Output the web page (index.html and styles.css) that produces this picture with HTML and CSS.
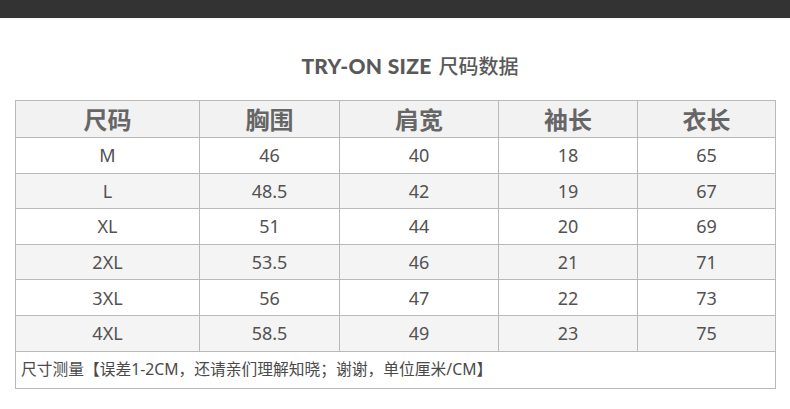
FILE: index.html
```html
<!DOCTYPE html>
<html lang="zh-CN">
<head>
<meta charset="utf-8">
<title>TRY-ON SIZE 尺码数据</title>
<link rel="stylesheet" href="styles.css">
</head>
<body>
<div class="topbar"></div>
<h1 class="title"><span class="title-en">TRY-ON SIZE</span> <span class="title-cn">尺码数据</span></h1>
<table class="size-table">
  <colgroup>
    <col class="c1"><col class="c2"><col class="c3"><col class="c4"><col class="c5">
  </colgroup>
  <thead>
    <tr class="head"><th>尺码</th><th>胸围</th><th>肩宽</th><th>袖长</th><th>衣长</th></tr>
  </thead>
  <tbody>
    <tr class="r1"><td>M</td><td>46</td><td>40</td><td>18</td><td>65</td></tr>
    <tr class="r2 alt"><td>L</td><td>48.5</td><td>42</td><td>19</td><td>67</td></tr>
    <tr class="r3"><td>XL</td><td>51</td><td>44</td><td>20</td><td>69</td></tr>
    <tr class="r4 alt"><td>2XL</td><td>53.5</td><td>46</td><td>21</td><td>71</td></tr>
    <tr class="r5"><td>3XL</td><td>56</td><td>47</td><td>22</td><td>73</td></tr>
    <tr class="r6 alt"><td>4XL</td><td>58.5</td><td>49</td><td>23</td><td>75</td></tr>
    <tr class="note"><td colspan="5">尺寸测量【误差1-2CM，还请亲们理解知晓；谢谢，单位厘米/CM】</td></tr>
  </tbody>
</table>
</body>
</html>
```

FILE: styles.css
```css
html, body {
  margin: 0;
  padding: 0;
  background: #ffffff;
}
body {
  font-family: "Noto Sans", "Noto Sans CJK SC", sans-serif;
  color: #555555;
}
.topbar {
  height: 18px;
  background: #333333;
  border-bottom: 1px solid #f4f4f4;
}
.title {
  margin: 0;
  height: 81px;
  padding: 12px 0 0 30px;
  display: flex;
  align-items: center;
  justify-content: center;
  gap: 7px;
  font-weight: normal;
  color: #595959;
  box-sizing: border-box;
}
.title-en {
  font-family: "Lato", "Open Sans", sans-serif;
  font-weight: 900;
  font-size: 21px;
  letter-spacing: 0.3px;
}
.title-cn {
  font-family: "Noto Sans CJK SC", sans-serif;
  font-weight: 500;
  font-size: 20px;
}
.size-table {
  margin: 0 0 0 15px;
  width: 761px;
  border-collapse: collapse;
  table-layout: fixed;
  border: 1px solid #8f8f8f;
}
.c1 { width: 184px; }
.c2 { width: 140px; }
.c3 { width: 159px; }
.c4 { width: 139px; }
.c5 { width: 138px; }
.size-table th,
.size-table td {
  border: 1px solid #b9b9b9;
  padding: 0;
  text-align: center;
  vertical-align: middle;
}
.size-table th {
  height: 36px;
  background: #f2f2f2;
  font-family: "Noto Sans CJK SC", sans-serif;
  font-weight: 700;
  font-size: 24px;
  color: #666666;
  line-height: 1;
}
.size-table td {
  height: 34.6px;
  font-size: 18px;
  font-weight: 400;
  color: #525252;
  line-height: 1;
}
.size-table tr.alt td {
  background: #f4f4f4;
}
.size-table tr.note td {
  height: 36px;
  text-align: left;
  padding-left: 5px;
  font-size: 15.75px;
  color: #4a4a4a;
  background: #ffffff;
}
```
